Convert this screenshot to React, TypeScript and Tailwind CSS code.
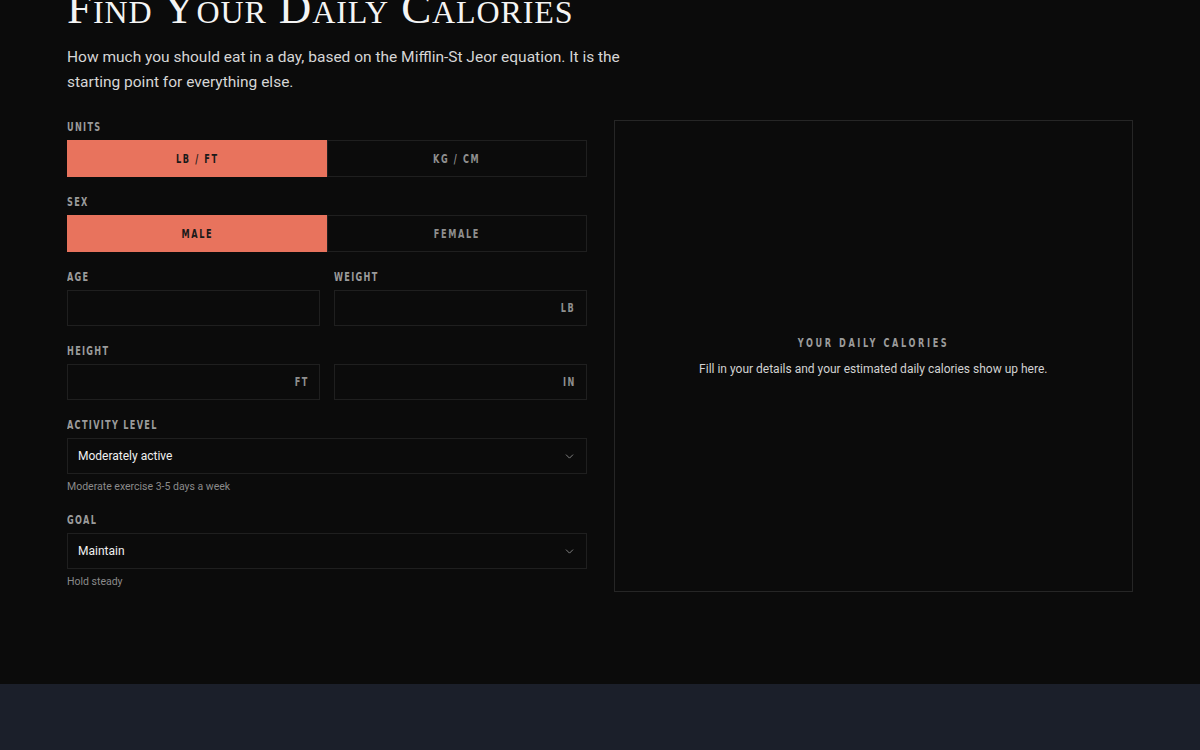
import { ChevronDown } from 'lucide-react';

const label = "block text-[12px] leading-[14px] font-bold tracking-[0.16em] text-[#9b9b9b] uppercase";
const labelFont = {
  fontFamily: '"DejaVu Sans", sans-serif',
};

function Cond({ children, className = '' }: { children: React.ReactNode; className?: string }) {
  return (
    <span style={labelFont} className={`inline-block origin-left scale-x-[0.68] ${className}`}>
      {children}
    </span>
  );
}

function Toggle({ options, active }: { options: string[]; active: number }) {
  return (
    <div className="grid grid-cols-2 h-[37px]">
      {options.map((o, i) => (
        <button
          key={o}
          className={`flex items-center justify-center text-[12px] font-bold tracking-[0.2em] ${
            i === active
              ? 'bg-[#e8735d] text-[#1a1a1a] border border-[#e8735d]'
              : 'bg-[#0b0b0b] text-[#8f8f8f] border border-[#1f1f1f]'
          }`}
        >
          <span style={labelFont} className="inline-block scale-x-[0.68]">{o}</span>
        </button>
      ))}
    </div>
  );
}

function Label({ children }: { children: React.ReactNode }) {
  return (
    <span className={`${label} mb-[6px]`}>
      <Cond>{children}</Cond>
    </span>
  );
}

function Field({ title, suffix }: { title?: string; suffix?: string }) {
  return (
    <div>
      <Label>{title ?? '\u00a0'}</Label>
      <div className="h-[36px] border border-[#1f1f1f] flex items-center justify-end px-[10px]">
        {suffix && (
          <span style={labelFont} className="inline-block origin-right scale-x-[0.68] text-[12px] font-bold tracking-[0.18em] text-[#8f8f8f]">
            {suffix}
          </span>
        )}
      </div>
    </div>
  );
}

function Select({ title, value, hint }: { title: string; value: string; hint: string }) {
  return (
    <div>
      <Label>{title}</Label>
      <div className="h-[36px] border border-[#1f1f1f] flex items-center justify-between pl-[10px] pr-[10px]">
        <span className="text-[12px] text-[#f0f0f0]">{value}</span>
        <ChevronDown size={13} strokeWidth={1.5} className="text-[#9a9a9a]" />
      </div>
      <p className="mt-[5px] text-[10.5px] leading-[16px] text-[#8a8a8a]">{hint}</p>
    </div>
  );
}

export default function App() {
  return (
    <div className="min-h-screen bg-[#0b0b0b]" style={{ fontFamily: 'Roboto, "Noto Sans", sans-serif' }}>
      <section className="px-[67px] pb-[94px]">
        <h1
          className="text-[45px] leading-[44px] -mt-[14px] text-[#f4f4f4] tracking-[0.02em]"
          style={{ fontFamily: '"Liberation Serif", serif', fontVariant: 'small-caps' }}
        >
          Find Your Daily Calories
        </h1>
        <p className="mt-[15px] max-w-[570px] text-[15.5px] leading-[25px] text-[#d6d6d6]">
          How much you should eat in a day, based on the Mifflin-St Jeor equation. It is the starting point for everything else.
        </p>

        <div className="mt-[25px] grid grid-cols-2 gap-[27px]">
          <div className="flex flex-col gap-[18px]">
            <div>
              <Label>Units</Label>
              <Toggle options={['LB / FT', 'KG / CM']} active={0} />
            </div>
            <div>
              <Label>Sex</Label>
              <Toggle options={['MALE', 'FEMALE']} active={0} />
            </div>
            <div className="grid grid-cols-2 gap-[14px]">
              <Field title="Age" />
              <Field title="Weight" suffix="LB" />
            </div>
            <div className="grid grid-cols-2 gap-[14px]">
              <Field title="Height" suffix="FT" />
              <Field suffix="IN" />
            </div>
            <Select title="Activity level" value="Moderately active" hint="Moderate exercise 3-5 days a week" />
            <Select title="Goal" value="Maintain" hint="Hold steady" />
          </div>

          <div className="border border-[#262626] flex flex-col items-center justify-center text-center mb-[-2px]">
            <span style={labelFont} className="inline-block scale-x-[0.68] text-[12px] font-bold tracking-[0.32em] text-[#9b9b9b]">
              YOUR DAILY CALORIES
            </span>
            <p className="mt-[8px] text-[12px] text-[#d2d2d2]">
              Fill in your details and your estimated daily calories show up here.
            </p>
          </div>
        </div>
      </section>
      <section className="h-[300px] bg-[#1b1f2a]" />
    </div>
  );
}
